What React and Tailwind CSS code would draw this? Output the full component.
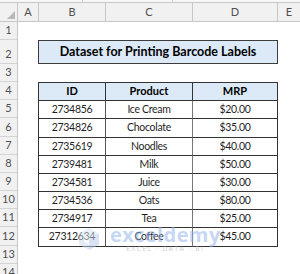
import React from "react";

const rows = [
  ["2734856", "Ice Cream", "$20.00"],
  ["2734826", "Chocolate", "$35.00"],
  ["2735619", "Noodles", "$40.00"],
  ["2739481", "Milk", "$50.00"],
  ["2734581", "Juice", "$30.00"],
  ["2734536", "Oats", "$80.00"],
  ["2734917", "Tea", "$25.00"],
  ["27312634", "Coffee", "$45.00"],
];

// row header heights, rows 1..15
const rowHeights = ["h-[18px]", "h-[24px]", "h-[18px]", "h-[18px]", "h-[18px]", "h-[19px]", "h-[18px]", "h-[18px]", "h-[18px]", "h-[18px]", "h-[18px]", "h-[19px]", "h-[18px]", "h-[18px]", "h-[18px]"];
const dataHeights = ["h-[18px]", "h-[19px]", "h-[18px]", "h-[18px]", "h-[18px]", "h-[18px]", "h-[18px]", "h-[19px]"];

const CubeLogo = () => (
  <svg width="24" height="24" viewBox="0 0 24 24">
    <polygon points="12,1 22,6.5 22,17.5 12,23 2,17.5 2,6.5" fill="#c9d8f0" />
    <polygon points="12,1 22,6.5 12,12 2,6.5" fill="#dde7f6" />
    <polygon points="12,12 22,6.5 22,17.5 12,23" fill="#b5c9ec" />
    <polygon points="7,9 12,12 12,18 7,15" fill="#ffffff" opacity="0.7" />
  </svg>
);

export default function App() {
  return (
    <div className="relative w-[300px] h-[274px] overflow-hidden bg-white font-['Lato',sans-serif]">
      {/* formula bar edge */}
      <div className="h-[3px] flex bg-[#f7f7f7] border-b border-[#c8c8c8]">
        <div className="w-[83px] border-r border-[#d0d0d0]" />
        <div className="w-[90px] border-r border-[#d0d0d0]" />
      </div>

      {/* column headers */}
      <div className="flex h-[19px] bg-[#f1f1f1] border-b border-[#c6c6c6] text-[11px] text-[#505050]">
        <div className="w-[18px] shrink-0 border-r border-[#c6c6c6] flex items-end justify-end pr-[2px] pb-[2px]">
          <svg width="8" height="8" viewBox="0 0 8 8">
            <polygon points="8,0 8,8 0,8" fill="#b8b8b8" />
          </svg>
        </div>
        <div className="w-[21px] shrink-0 border-r border-[#c6c6c6] flex items-center justify-center">A</div>
        <div className="w-[67px] shrink-0 border-r border-[#c6c6c6] flex items-center justify-center">B</div>
        <div className="w-[87px] shrink-0 border-r border-[#c6c6c6] flex items-center justify-center">C</div>
        <div className="w-[85px] shrink-0 border-r border-[#c6c6c6] flex items-center justify-center">D</div>
        <div className="flex-1 flex items-center justify-center">E</div>
      </div>

      <div className="flex">
        {/* row headers */}
        <div className="w-[18px] shrink-0 bg-[#f1f1f1] border-r border-[#c6c6c6] text-[11px] text-[#505050]">
          {rowHeights.map((h, i) => (
            <div key={i} className={`${h} border-b border-[#d4d4d4] flex items-end justify-center pb-[1px]`}>
              {i + 1}
            </div>
          ))}
        </div>

        {/* sheet */}
        <div className="pl-[20px] text-[#1f1f1f]">
          <div className="h-[18px]" />
          <div className="w-[240px] h-[24px] border border-[#3c3c3c] bg-[#dce9f6] flex items-center justify-center text-[12.5px] font-bold text-black">
            Dataset for Printing Barcode Labels
          </div>
          <div className="h-[18px]" />

          <div className="w-[240px] border-l border-t border-[#333]">
            <div className="flex h-[18px] bg-[#dce9f6] text-[11px] font-bold text-black">
              <div className="w-[67px] border-r border-b border-[#333] flex items-center justify-center">ID</div>
              <div className="w-[87px] border-r border-b border-[#333] flex items-center justify-center">Product</div>
              <div className="w-[85px] border-r border-b border-[#333] flex items-center justify-center">MRP</div>
            </div>
            {rows.map((r, i) => (
              <div key={r[0]} className={`flex ${dataHeights[i]} text-[10.5px] tracking-[-0.3px]`}>
                <div className="w-[67px] border-r border-b border-r-[#555] border-b-[#333] flex items-center justify-center">{r[0]}</div>
                <div className="w-[87px] border-r border-b border-r-[#777] border-b-[#333] flex items-center justify-center">{r[1]}</div>
                <div className="w-[85px] border-r border-b border-[#333] flex items-center justify-center">{r[2]}</div>
              </div>
            ))}
          </div>
        </div>
      </div>

      {/* watermark */}
      <div className="absolute left-[77px] top-[227px] flex items-start gap-[9px] opacity-50 pointer-events-none">
        <CubeLogo />
        <div className="flex flex-col items-center -mt-[2px]">
          <span className="text-[20px] leading-[20px] font-bold text-[#8fb0e8] font-['Open_Sans',sans-serif] tracking-[0.4px]">
            exceldemy
          </span>
          <span className="text-[6.5px] leading-[8px] text-[#9a9a9a] tracking-[1.6px] font-['Open_Sans',sans-serif]">
            EXCEL · DATA · BI
          </span>
        </div>
      </div>
    </div>
  );
}
